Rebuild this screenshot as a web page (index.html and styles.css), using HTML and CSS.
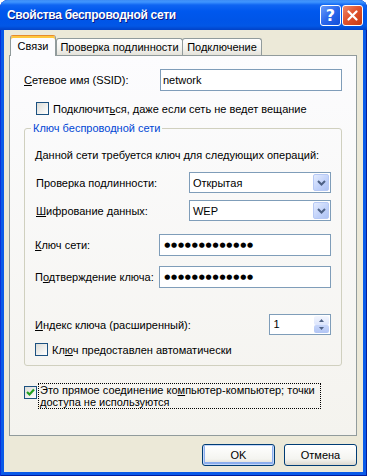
FILE: index.html
```html
<!DOCTYPE html>
<html lang="ru">
<head>
    <meta charset="UTF-8">
    <title>Свойства беспроводной сети</title>
    <link rel="stylesheet" href="styles.css">
</head>
<body>
    <div class="window">
        <div class="titlebar">
            <span class="title">Свойства беспроводной сети</span>
            <div class="caption-buttons">
                <span class="cap-btn help">?</span>
                <span class="cap-btn close">
                    <svg width="11" height="11" viewBox="0 0 11 11"><path d="M1.5 1.5 L9.5 9.5 M9.5 1.5 L1.5 9.5" stroke="#fff" stroke-width="2.2" stroke-linecap="round"/></svg>
                </span>
            </div>
        </div>
        <div class="client">
            <div class="tabs">
                <div class="tab active">Связи</div>
                <div class="tab tab-auth">Проверка подлинности</div>
                <div class="tab tab-conn">Подключение</div>
            </div>
            <div class="panel">
                <div class="row">
                    <span class="lbl lbl-ssid"><u>С</u>етевое имя (SSID):</span>
                    <div class="input input-ssid">network</div>
                </div>
                <div class="check check-broadcast">
                    <span class="box"></span>
                    <span>Подключит<u>ь</u>ся, даже если сеть не ведет вещание</span>
                </div>

                <fieldset class="group">
                    <legend>Ключ беспроводной сети</legend>
                    <p class="note">Данной сети требуется ключ для следующих операций:</p>
                    <div class="row row-sel">
                        <span class="lbl lbl-sel">Проверка по<u>д</u>линности:</span>
                        <div class="select"><span>Открытая</span><span class="arrow"><svg width="9" height="6" viewBox="0 0 9 6"><path d="M1 1 L4.5 4.5 L8 1" fill="none" stroke="#4D6185" stroke-width="2"/></svg></span></div>
                    </div>
                    <div class="row row-sel2">
                        <span class="lbl lbl-sel"><u>Ш</u>ифрование данных:</span>
                        <div class="select"><span>WEP</span><span class="arrow"><svg width="9" height="6" viewBox="0 0 9 6"><path d="M1 1 L4.5 4.5 L8 1" fill="none" stroke="#4D6185" stroke-width="2"/></svg></span></div>
                    </div>
                    <div class="row row-key">
                        <span class="lbl lbl-key"><u>К</u>люч сети:</span>
                        <div class="input input-key"><span class="dots">●●●●●●●●●●●●●</span></div>
                    </div>
                    <div class="row row-key2">
                        <span class="lbl lbl-key">П<u>о</u>дтверждение ключа:</span>
                        <div class="input input-key"><span class="dots">●●●●●●●●●●●●●</span></div>
                    </div>
                    <div class="row row-index">
                        <span class="lbl lbl-index"><u>И</u>ндекс ключа (расширенный):</span>
                        <div class="spin">
                            <span class="spin-val">1</span>
                            <div class="spin-btns">
                                <span class="spin-up"><svg width="5" height="3" viewBox="0 0 5 3"><path d="M0 3 L2.5 0 L5 3 Z" fill="#4D6185"/></svg></span>
                                <span class="spin-down"><svg width="5" height="3" viewBox="0 0 5 3"><path d="M0 0 L2.5 3 L5 0 Z" fill="#4D6185"/></svg></span>
                            </div>
                        </div>
                    </div>
                    <div class="check check-auto">
                        <span class="box"></span>
                        <span>Кл<u>ю</u>ч предоставлен автоматически</span>
                    </div>
                </fieldset>

                <div class="check check-adhoc">
                    <span class="box checked">
                        <svg width="11" height="11" viewBox="0 0 11 11"><path d="M2 5 L4.5 7.5 L9 2.5" fill="none" stroke="#21A121" stroke-width="2.2"/></svg>
                    </span>
                    <span class="focus">Это прямое соединение ко<u>м</u>пьютер-компьютер; точки<br>доступа не используются</span>
                </div>
            </div>
            <div class="buttons">
                <span class="btn default">OK</span>
                <span class="btn">Отмена</span>
            </div>
        </div>
    </div>
</body>
</html>
```
FILE: styles.css
```css
* {
    box-sizing: border-box;
}

body {
    margin: 0;
    background: #fff;
    font-family: "Liberation Sans", Arial, sans-serif;
    font-size: 11px;
    color: #000;
}

u {
    text-decoration: underline;
}

.window {
    width: 367px;
    height: 476px;
    display: flex;
    flex-direction: column;
    background: #0A5AE8;
    border-radius: 8px 8px 0 0;
    box-shadow: inset 1px 0 #0831D9, inset -1px 0 #001EA0, inset 0 -1px #001EA0;
    overflow: hidden;
}

/* title bar */
.titlebar {
    height: 30px;
    flex: none;
    display: flex;
    align-items: center;
    justify-content: space-between;
    padding: 0 4px 0 7px;
    background: linear-gradient(to bottom, #3D8CF5 0, #3F95FF 2px, #0F65F2 5px, #0058EE 11px, #0055E8 20px, #0257E6 26px, #0242C6 30px);
}

.title {
    color: #fff;
    font-family: "Liberation Sans", Arial, sans-serif;
    font-weight: bold;
    font-size: 12px;
    letter-spacing: -0.3px;
    text-shadow: 1px 1px #0A1883;
}

.caption-buttons {
    display: flex;
    gap: 1px;
}

.cap-btn {
    width: 21px;
    height: 21px;
    border: 1px solid #fff;
    border-radius: 3px;
    display: flex;
    align-items: center;
    justify-content: center;
}

.help {
    background: linear-gradient(135deg, #6A9CF9 0%, #2A67EC 50%, #124ED8 100%);
    color: #fff;
    font-weight: bold;
    font-size: 16px;
    font-family: "DejaVu Sans", sans-serif;
}

.close {
    background: linear-gradient(135deg, #EE8A6C 0%, #E1532E 45%, #C63A12 100%);
}

/* client area */
.client {
    flex: 1;
    margin: 0 4px 4px;
    background: #ECE9D8;
    display: flex;
    flex-direction: column;
}

.tabs {
    display: flex;
    align-items: flex-end;
    margin: 5px 0 -1px 6px;
    position: relative;
    z-index: 1;
}

.tab {
    height: 17px;
    margin-bottom: 1px;
    border: 1px solid #919B9C;
    border-bottom: none;
    border-radius: 3px 3px 0 0;
    background: linear-gradient(#FFFFFF, #F3F3EF 60%, #E4E2DA);
    line-height: 16px;
    text-align: center;
}

.tab.active {
    width: 46px;
    height: 21px;
    margin-bottom: 0;
    background: #FCFCFE;
    border-top: 1px solid #E68B2C;
    box-shadow: inset 0 2px 0 #FFC73C;
    padding-top: 3px;
    line-height: 15px;
}

.tab-auth {
    width: 127px;
}

.tab-conn {
    width: 80px;
    margin-left: -1px;
}

.panel {
    margin-left: 5px;
    width: 348px;
    height: 381px;
    flex: none;
    border: 1px solid #919B9C;
    background: linear-gradient(#FCFCFE, #F4F3EE);
    padding: 13px 14px 0;
}

.row {
    display: flex;
    align-items: center;
}

.lbl-ssid {
    width: 136px;
}

.input {
    height: 22px;
    border: 1px solid #7F9DB9;
    background: #fff;
    padding-left: 2px;
    display: flex;
    align-items: center;
}

.input-ssid {
    width: 182px;
}

.check {
    display: flex;
    align-items: center;
    gap: 4px;
}

.box {
    width: 13px;
    height: 13px;
    flex: none;
    border: 1px solid #1C5180;
    background: linear-gradient(135deg, #DCDCD7, #FFFFFF);
    display: flex;
    align-items: center;
    justify-content: center;
}

.check-broadcast {
    margin: 11px 0 0 12px;
}

/* group box */
.group {
    margin: 7px 0 0;
    padding: 0 10px 9px;
    border: 1px solid #D0D0BF;
    border-radius: 3px;
    min-width: 0;
}

.group legend {
    color: #0046D5;
    line-height: 13px;
    padding: 0 2px;
    margin-left: -4px;
}

.note {
    margin: 14px 0 0;
    line-height: 13px;
}

.row-sel {
    margin-top: 10px;
}

.row-sel2 {
    margin-top: 7px;
}

.lbl-sel {
    width: 155px;
    padding-left: 1px;
}

.select {
    width: 143px;
    height: 21px;
    border: 1px solid #7F9DB9;
    background: #fff;
    display: flex;
    align-items: center;
    justify-content: space-between;
    padding-left: 3px;
}

.arrow {
    width: 16px;
    height: 17px;
    margin-right: 1px;
    border: 1px solid #B7C9F5;
    border-radius: 2px;
    background: linear-gradient(135deg, #E4ECFE, #C0D1FA 60%, #AEC3F4);
    display: flex;
    align-items: center;
    justify-content: center;
}

.row-key {
    margin-top: 13px;
}

.row-key2 {
    margin-top: 10px;
}

.lbl-key {
    width: 125px;
}

.input-key {
    width: 173px;
    padding-left: 4px;
}

.dots {
    font-family: "DejaVu Sans", sans-serif;
    font-size: 7px;
    letter-spacing: 0.8px;
}

.row-index {
    margin-top: 26px;
}

.lbl-index {
    width: 236px;
}

.spin {
    width: 62px;
    height: 21px;
    border: 1px solid #7F9DB9;
    background: #fff;
    display: flex;
    justify-content: space-between;
}

.spin-val {
    padding: 3px 0 0 3px;
}

.spin-btns {
    width: 15px;
    margin: 1px;
    display: flex;
    flex-direction: column;
}

.spin-up,
.spin-down {
    flex: 1;
    display: flex;
    align-items: center;
    justify-content: center;
    border-radius: 2px;
}

.spin-up {
    background: linear-gradient(#F3F6FE, #DCE5FC);
}

.spin-down {
    background: linear-gradient(#C7D6FA, #B2C5F4);
}

.check-auto {
    margin-top: 8px;
}

.check-adhoc {
    margin-top: 17px;
    align-items: flex-start;
    gap: 1px;
}

.check-adhoc .box {
    margin-top: 3px;
}

.focus {
    width: 283px;
    border: 1px dotted #000;
    padding: 0 1px;
    line-height: 12px;
}

/* bottom buttons */
.buttons {
    display: flex;
    justify-content: flex-end;
    gap: 9px;
    margin: 8px 6px 0 0;
}

.btn {
    width: 73px;
    height: 22px;
    border: 1px solid #003C74;
    border-radius: 3px;
    background: linear-gradient(#FFFFFF, #F4F4F0 70%, #DCD8CE);
    text-align: center;
    line-height: 20px;
}

.btn.default {
    box-shadow: inset 0 0 0 1px #C4D7F9, inset 0 -1px 0 2px #8CAEEE;
}
```
